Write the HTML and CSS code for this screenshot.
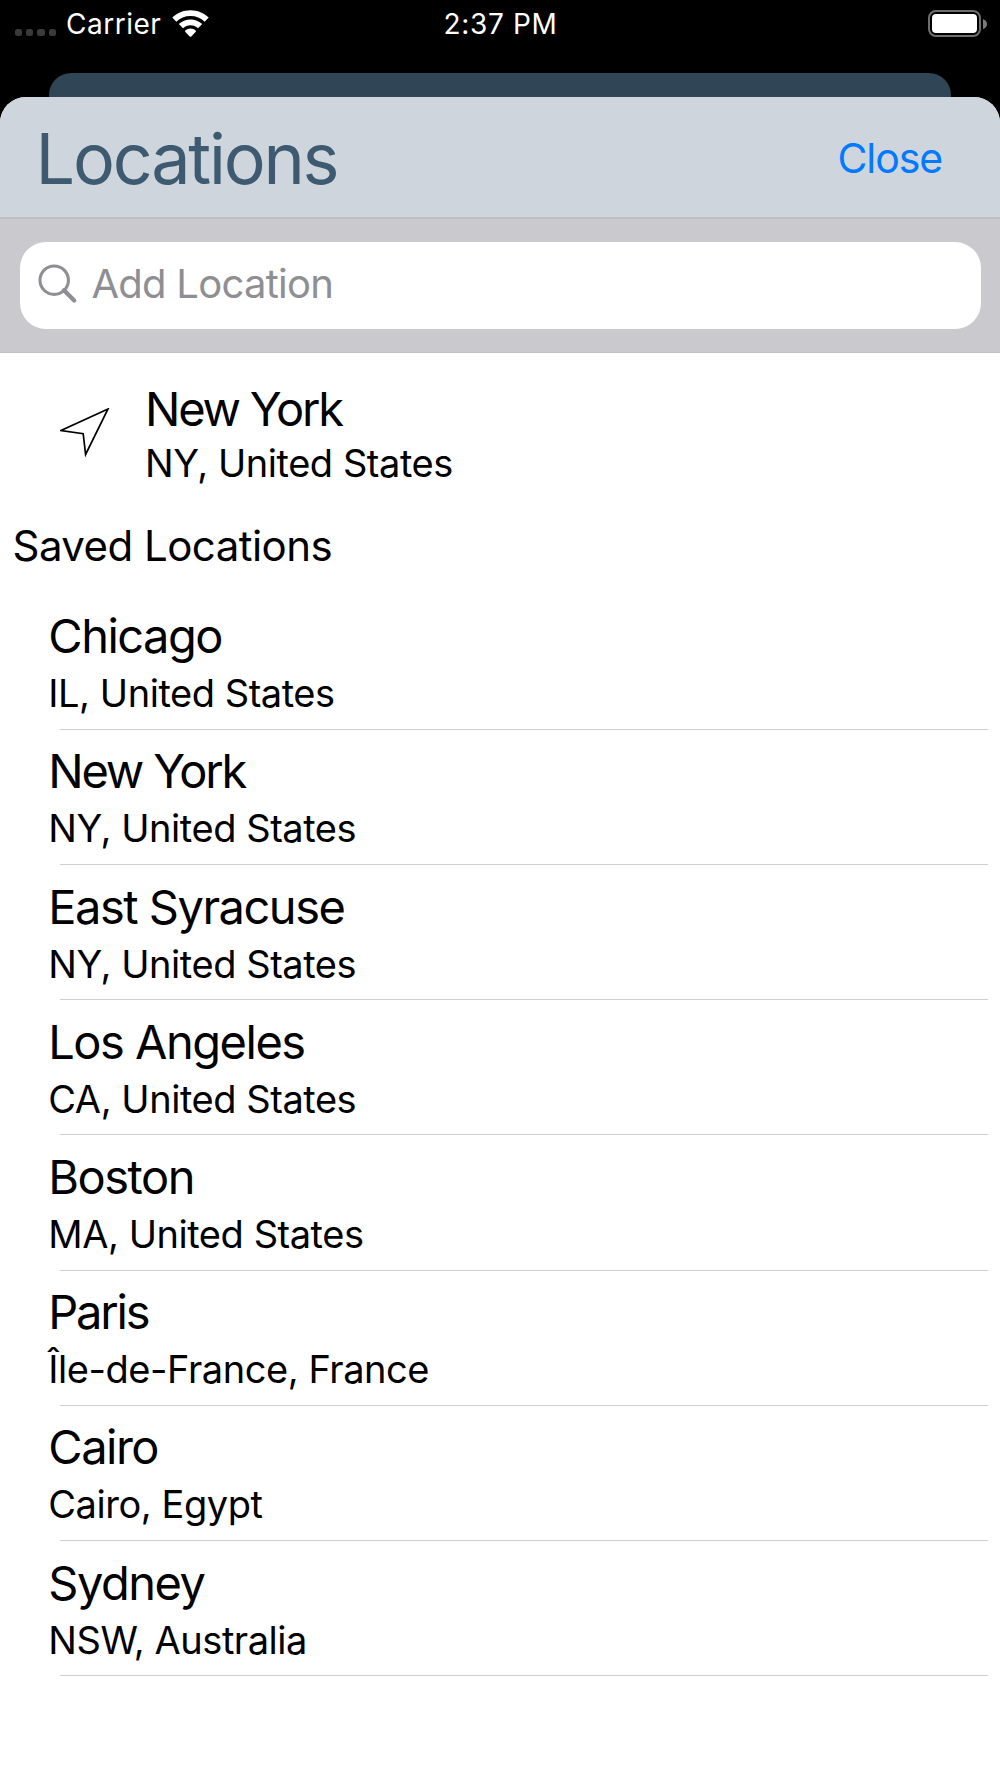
FILE: index.html
```html
<!DOCTYPE html>
<html lang="en">

<head>
    <meta charset="UTF-8">
    <meta name="viewport" content="width=device-width, initial-scale=1.0">
    <title>Locations</title>
    <link rel="stylesheet" href="styles.css">
</head>

<body>
    <div class="status-bar">
        <div class="status-left">
            <div class="signal">
                <span></span><span></span><span></span><span></span>
            </div>
            <span class="carrier">Carrier</span>
            <svg class="wifi" viewBox="0 0 37 28" width="37" height="28">
                <path d="M18.5 0.3C25.5 0.3 32 3 36.7 7.6L32.7 11.8C28.9 8.1 24 6.1 18.5 6.1S8.1 8.1 4.3 11.8L0.3 7.6C5 3 11.5 0.3 18.5 0.3Z" />
                <path d="M18.5 9.4C23 9.4 27.1 11.1 30.2 14L26 18.2C23.9 16.3 21.4 15.2 18.5 15.2S13.1 16.3 11 18.2L6.8 14C9.9 11.1 14 9.4 18.5 9.4Z" />
                <path d="M18.5 18.5C20.5 18.5 22.3 19.2 23.7 20.5L24 21.6L19.3 26.4Q18.5 27.2 17.7 26.4L13 21.6L13.3 20.5C14.7 19.2 16.5 18.5 18.5 18.5Z" />
            </svg>
        </div>
        <span class="time">2:37 PM</span>
        <div class="battery">
            <div class="battery-body"></div>
            <svg viewBox="0 0 4 10" width="4" height="10">
                <path d="M0 0Q4 1.5 4 5T0 10Z" fill="#7a7a7a" />
            </svg>
        </div>
    </div>

    <div class="back-card"></div>

    <main class="sheet">
        <header>
            <h1>Locations</h1>
            <a class="close" href="#">Close</a>
        </header>

        <div class="search-bar">
            <div class="search-field">
                <svg viewBox="0 0 40 40" width="40" height="40">
                    <circle cx="16.2" cy="16.2" r="14.2" stroke-width="3.1" />
                    <path d="M26 26.3L36.2 36.5" stroke-width="4.4" stroke-linecap="round" />
                </svg>
                <span>Add Location</span>
            </div>
        </div>

        <div class="current">
            <svg viewBox="0 0 50 50" width="50" height="50">
                <path d="M48 1L1 22.6L23.2 25.7L25.6 46.5Z" />
            </svg>
            <div>
                <p class="name tight">New York</p>
                <p class="region">NY, United States</p>
            </div>
        </div>

        <h2>Saved Locations</h2>

        <ul class="saved">
            <li>
                <p class="name">Chicago</p>
                <p class="region">IL, United States</p>
            </li>
            <li>
                <p class="name tight">New York</p>
                <p class="region">NY, United States</p>
            </li>
            <li>
                <p class="name">East Syracuse</p>
                <p class="region">NY, United States</p>
            </li>
            <li>
                <p class="name">Los Angeles</p>
                <p class="region">CA, United States</p>
            </li>
            <li>
                <p class="name">Boston</p>
                <p class="region">MA, United States</p>
            </li>
            <li>
                <p class="name tight">Paris</p>
                <p class="region">Île-de-France, France</p>
            </li>
            <li>
                <p class="name">Cairo</p>
                <p class="region">Cairo, Egypt</p>
            </li>
            <li>
                <p class="name">Sydney</p>
                <p class="region">NSW, Australia</p>
            </li>
        </ul>
    </main>
</body>

</html>
```
FILE: styles.css
```css
* {
    box-sizing: border-box;
}

body {
    margin: 0;
    background: #000;
    color: #000;
    font-family: Inter, "Liberation Sans", sans-serif;
    min-height: 100vh;
    display: flex;
    flex-direction: column;
}

h1,
h2,
p,
ul {
    margin: 0;
    padding: 0;
    font-weight: 400;
}

/* Status bar */
.status-bar {
    height: 72.5px;
    padding: 0 13px 0 14px;
    display: grid;
    grid-template-columns: 1fr auto 1fr;
    align-items: start;
    color: #fff;
    font-size: 28px;
    line-height: 48px;
}

.status-left {
    display: flex;
    align-items: flex-start;
}

.signal {
    display: flex;
    gap: 4px;
    margin: 29px 10px 0 0.5px;
}

.signal span {
    width: 7.4px;
    height: 7.4px;
    border-radius: 2.5px;
    background: #3a3a3a;
}

.carrier {
    letter-spacing: 0.5px;
}

.wifi {
    margin: 10px 0 0 10.5px;
    fill: #fff;
}

.time {
    letter-spacing: 0.7px;
}

.battery {
    display: flex;
    align-items: center;
    justify-content: flex-end;
    gap: 2px;
    margin-top: 10px;
}

.battery-body {
    width: 53px;
    height: 27px;
    border: 2px solid #6e6e6e;
    border-radius: 8px;
    padding: 2.4px;
}

.battery-body::before {
    content: "";
    display: block;
    height: 100%;
    border-radius: 4px;
    background: #fff;
}

/* Sheet */
.back-card {
    height: 24.5px;
    margin: 0 49px 0 48.5px;
    border-radius: 22px 22px 0 0;
    background: #304656;
}

.sheet {
    flex: 1;
    background: #fff;
    border-radius: 26px 26px 0 0;
    overflow: hidden;
}

header {
    height: 120px;
    padding: 2px 58px 0 35.5px;
    display: flex;
    align-items: center;
    justify-content: space-between;
    background: #ced5dc;
}

h1 {
    color: #3d5a70;
    font-size: 70px;
    letter-spacing: -2.2px;
}

.close {
    color: #007aff;
    font-size: 41px;
    letter-spacing: -1.1px;
    text-decoration: none;
}

.search-bar {
    height: 136px;
    padding: 23px 19.5px 0;
    border-top: 2px solid #bfbfc3;
    border-bottom: 1px solid #c2c2c4;
    background: #c9c9ce;
}

.search-field {
    height: 86.5px;
    padding: 0 18px 3px;
    display: flex;
    align-items: center;
    gap: 14px;
    border-radius: 26px;
    background: #fff;
    color: #8e8e93;
    font-size: 40px;
    letter-spacing: -0.75px;
}

.search-field svg {
    fill: none;
    stroke: #8e8e93;
}

.name {
    font-size: 47px;
    line-height: 56px;
    letter-spacing: -1.5px;
}

.tight {
    letter-spacing: -2.2px;
}

.region {
    font-size: 38px;
    line-height: 52px;
    letter-spacing: -0.45px;
}

.current {
    display: flex;
    align-items: center;
    gap: 35px;
    padding: 28px 0 0 60px;
}

.current svg {
    margin-bottom: 4px;
    fill: none;
    stroke: #000;
    stroke-width: 1.7;
}

h2 {
    margin-top: 31px;
    padding-left: 12.5px;
    font-size: 42px;
    line-height: 52px;
    letter-spacing: -0.54px;
}

.saved {
    margin-top: 22.7px;
    list-style: none;
}

.saved li {
    height: 135.2px;
    padding: 13.5px 0 0 48.3px;
    background: linear-gradient(#cfcfd1, #cfcfd1) 60px 100% / 928px 1px no-repeat;
}

.saved .region {
    margin-top: 3px;
}
```
